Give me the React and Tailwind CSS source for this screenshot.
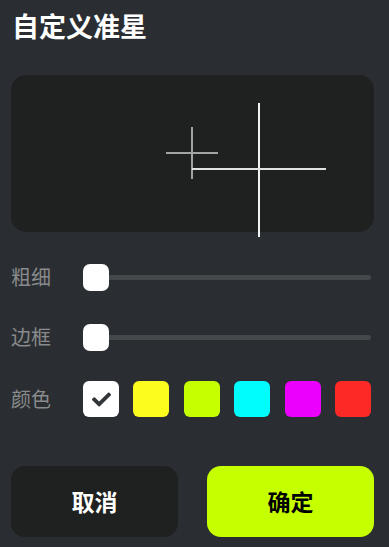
import React from 'react';
import { FaCheck } from 'react-icons/fa';

const swatches = ['#ffffff', '#fdfc1f', '#c6ff00', '#00fdfd', '#ec00fd', '#fd2926'];

function SliderRow({ label }) {
  return (
    <div className="flex items-center h-[60px]">
      <span className="w-[72px] text-[20px] text-[#888a8b]">{label}</span>
      <div className="relative flex-1 h-[27px] mr-[3px]">
        <div className="absolute left-0 right-0 top-[11px] h-[5px] rounded-full bg-[#44484b]" />
        <div className="absolute left-0 top-0 w-[26px] h-[27px] rounded-[7px] bg-white" />
      </div>
    </div>
  );
}

export default function App() {
  return (
    <div
      className="w-[389px] h-[547px] bg-[#2a2e32] pl-[11px] pr-[15px] overflow-hidden"
      style={{ fontFamily: '"Noto Sans CJK SC", "Noto Sans", sans-serif' }}
    >
      <div className="h-[75px] pt-[9px] pl-px">
        <h1 className="text-[27px] leading-[33px] font-bold text-white">自定义准星</h1>
      </div>

      <div className="relative h-[157px] rounded-[15px] bg-[#1f2120]">
        <svg className="absolute inset-0 overflow-visible" width="363" height="157">
          <line x1="181" y1="52" x2="181" y2="104" stroke="#a3a3a3" strokeWidth="2" />
          <line x1="155" y1="78" x2="207" y2="78" stroke="#a3a3a3" strokeWidth="2" />
          <line x1="248" y1="28" x2="248" y2="162" stroke="#f2f2f2" strokeWidth="2" />
          <line x1="181" y1="94" x2="315" y2="94" stroke="#e2e2e2" strokeWidth="2" />
        </svg>
      </div>

      <div className="mt-[15px]">
        <SliderRow label="粗细" />
        <SliderRow label="边框" />
        <div className="flex items-center h-[64px]">
          <span className="w-[72px] text-[20px] text-[#888a8b]">颜色</span>
          <div className="flex-1 flex justify-between mr-[3px]">
            {swatches.map((c, i) => (
              <div
                key={c}
                className="w-[36px] h-[36px] rounded-[6px] flex items-center justify-center"
                style={{ backgroundColor: c }}
              >
                {i === 0 && <FaCheck className="text-[#333638]" size={19} />}
              </div>
            ))}
          </div>
        </div>
      </div>

      <div className="flex gap-[29px] mt-[35px]">
        <button className="flex-1 h-[71px] rounded-[14px] bg-[#1f2120] text-white text-[23px] font-bold">
          取消
        </button>
        <button className="flex-1 h-[71px] rounded-[14px] bg-[#c6ff00] text-black text-[23px] font-bold">
          确定
        </button>
      </div>
    </div>
  );
}
